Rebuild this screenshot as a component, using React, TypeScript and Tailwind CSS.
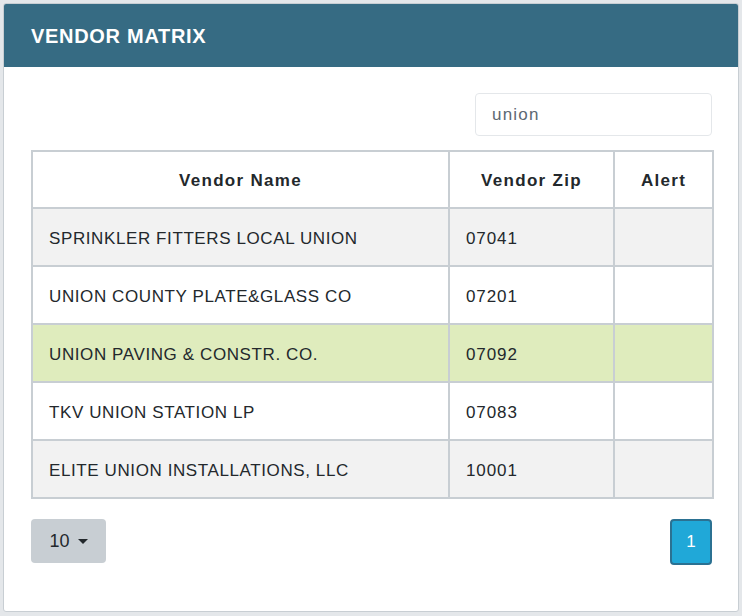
import React from 'react'

const rows = [
  { name: 'SPRINKLER FITTERS LOCAL UNION', zip: '07041', bg: 'bg-[#f2f2f2]' },
  { name: 'UNION COUNTY PLATE&GLASS CO', zip: '07201', bg: 'bg-white' },
  { name: 'UNION PAVING & CONSTR. CO.', zip: '07092', bg: 'bg-[#dfecbd]' },
  { name: 'TKV UNION STATION LP', zip: '07083', bg: 'bg-white' },
  { name: 'ELITE UNION INSTALLATIONS, LLC', zip: '10001', bg: 'bg-[#f2f2f2]' },
]

const App = () => {
  return (
    <div className="w-[742px] h-[616px] bg-[#e4e7ea] p-[3px] font-['Liberation_Sans',sans-serif] text-[#23282c]">
      <div className="h-[609px] bg-white border border-[#c8ced3] rounded-[3px] overflow-hidden flex flex-col">
        <div className="h-[63px] bg-[#366b83] flex items-center px-[27px]">
          <h3 className="text-white text-[20px] font-bold tracking-[0.7px]">VENDOR MATRIX</h3>
        </div>
        <div className="pl-[27px] pr-[26px] pt-[26px]">
          <div className="flex justify-end">
            <input
              defaultValue="union"
              className="w-[237px] h-[43px] border border-[#e4e7ea] rounded-[4px] px-[16px] pt-[1px] text-[17px] tracking-[1.2px] text-[#5c6873] outline-none"
            />
          </div>
          <table className="mt-[14px] w-[683px] border-collapse border-2 border-[#c8ced3] text-[17px]">
            <thead>
              <tr className="h-[57px] bg-white">
                <th className="w-[417px] border-2 border-[#c8ced3] pt-[2px] font-bold text-center tracking-[1.3px]">Vendor Name</th>
                <th className="w-[165px] border-2 border-[#c8ced3] pt-[2px] font-bold text-center tracking-[1.3px]">Vendor Zip</th>
                <th className="border-2 border-[#c8ced3] pt-[2px] font-bold text-center tracking-[1.3px]">Alert</th>
              </tr>
            </thead>
            <tbody>
              {rows.map((r) => (
                <tr key={r.name} className={`h-[58px] ${r.bg}`}>
                  <td className="border-2 border-[#c8ced3] px-[16px] pt-[4px] tracking-[0.6px]">{r.name}</td>
                  <td className="border-2 border-[#c8ced3] px-[16px] pt-[4px] tracking-[0.9px]">{r.zip}</td>
                  <td className="border-2 border-[#c8ced3]"></td>
                </tr>
              ))}
            </tbody>
          </table>
          <div className="mt-[20px] flex justify-between items-start">
            <button className="w-[75px] h-[44px] bg-[#c8ced3] rounded-[4px] flex items-center justify-center gap-[8px] text-[18px]">
              10
              <span className="w-0 h-0 border-l-[5px] border-r-[5px] border-t-[5px] border-l-transparent border-r-transparent border-t-[#23282c]"></span>
            </button>
            <button className="w-[42px] h-[46px] bg-[#20a8d8] border-2 border-[#2b7192] rounded-[4px] text-white text-[17px] flex items-center justify-center">
              1
            </button>
          </div>
        </div>
      </div>
    </div>
  )
}

export default App
